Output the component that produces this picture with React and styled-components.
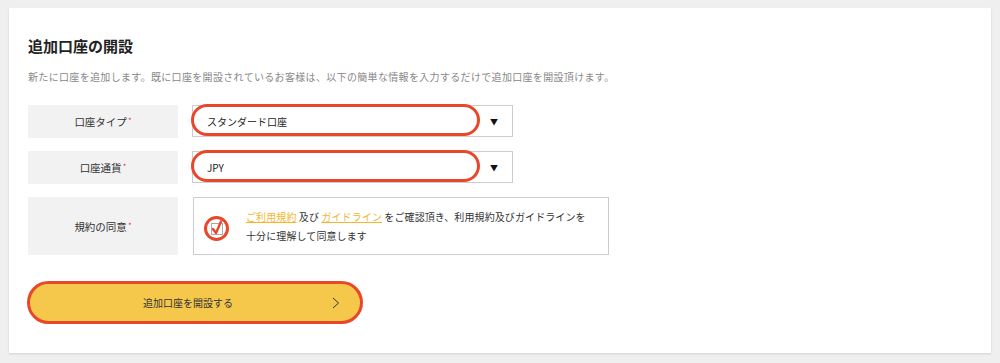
import React from 'react';
import styled, { createGlobalStyle } from 'styled-components';

const GlobalStyle = createGlobalStyle`
  body {
    margin: 0;
    background-color: #efefef;
    font-family: "Noto Sans CJK JP", "Noto Sans", sans-serif;
    color: #333;
  }
`;

const Page = styled.div`
  width: 1000px;
  height: 363px;
  padding: 8px 9px 10px;
  box-sizing: border-box;
`;

const Card = styled.div`
  height: 345px;
  padding: 28px 19px 0;
  box-sizing: border-box;
  background-color: #fff;
  box-shadow: 0 1px 2px rgba(0, 0, 0, 0.12);
  display: flex;
  flex-direction: column;
`;

const Title = styled.h2`
  margin: 0;
  font-size: 15px;
  line-height: 20px;
  font-weight: 700;
  color: #222;
`;

const Lead = styled.p`
  margin: 13px 0 0;
  font-size: 10px;
  line-height: 16px;
  letter-spacing: 0.33px;
  color: #888;
`;

const Form = styled.div`
  margin-top: 20px;
  display: flex;
  flex-direction: column;
  gap: 13px;
`;

const Row = styled.div`
  display: grid;
  grid-template-columns: 150px 1fr;
  column-gap: 14px;
  height: ${p => p.tall ? '58px' : '33px'};
`;

const Label = styled.div`
  display: flex;
  align-items: center;
  justify-content: center;
  background-color: #f2f2f2;
  font-size: 10.5px;
  color: #333;
`;

const Req = styled.sup`
  color: #e8344a;
  font-size: 8px;
  margin-left: 1px;
  position: relative;
  top: -1px;
`;

const Select = styled.div`
  position: relative;
  width: 321px;
  height: 32px;
  border: 1px solid #ccc;
  box-sizing: border-box;
  display: flex;
  align-items: center;
  justify-content: space-between;
  padding: 0 14px 0 14px;
  font-size: 10px;
  color: #222;
`;

const Arrow = styled.span`
  font-size: 8px;
  color: #111;
`;

const Mark = styled.span`
  position: absolute;
  left: -2px;
  top: -2px;
  width: 289px;
  height: 32px;
  border: 3px solid #e8472a;
  border-radius: 18px;
  box-sizing: border-box;
  pointer-events: none;
`;

const AgreeBox = styled.div`
  width: 416px;
  margin-left: 1px;
  border: 1px solid #ccc;
  box-sizing: border-box;
  display: flex;
  align-items: center;
  padding: 0 10px;
  gap: 17px;
`;

const CheckRing = styled.div`
  position: relative;
  width: 25px;
  height: 25px;
  border: 3px solid #e8472a;
  border-radius: 50%;
  box-sizing: border-box;
  flex-shrink: 0;
  margin-top: 5px;
  display: flex;
  align-items: center;
  justify-content: center;
`;

const CheckSquare = styled.div`
  width: 10px;
  height: 10px;
  border: 1px solid #aaa;
  background: #fff;
`;

const Tick = styled.svg`
  position: absolute;
  left: 4px;
  top: 1px;
`;

const AgreeText = styled.p`
  margin: 0;
  font-size: 10px;
  line-height: 19px;
  color: #333;
  letter-spacing: 0.1px;
`;

const Link = styled.a`
  color: #f2b62e;
  text-decoration: underline;
`;

const Submit = styled.button`
  margin: 26px 0 0 -1px;
  width: 336px;
  height: 43px;
  background-color: #f5c84c;
  border: 3px solid #e8472a;
  border-radius: 22px;
  box-sizing: border-box;
  display: flex;
  align-items: center;
  justify-content: center;
  position: relative;
  font-family: inherit;
  font-size: 10px;
  color: #333;
  padding: 0 14px 0 0;
`;

const Chevron = styled.svg`
  position: absolute;
  right: 20px;
  top: 50%;
  margin-top: -6px;
`;

export default function App() {
  return (
    <>
      <GlobalStyle />
      <Page>
        <Card>
          <Title>追加口座の開設</Title>
          <Lead>新たに口座を追加します。既に口座を開設されているお客様は、以下の簡単な情報を入力するだけで追加口座を開設頂けます。</Lead>
          <Form>
            <Row>
              <Label>口座タイプ<Req>*</Req></Label>
              <Select>
                <span>スタンダード口座</span>
                <Arrow>▼</Arrow>
                <Mark />
              </Select>
            </Row>
            <Row>
              <Label>口座通貨<Req>*</Req></Label>
              <Select>
                <span>JPY</span>
                <Arrow>▼</Arrow>
                <Mark />
              </Select>
            </Row>
            <Row tall>
              <Label>規約の同意<Req>*</Req></Label>
              <AgreeBox>
                <CheckRing>
                  <CheckSquare />
                  <Tick width="12" height="15" viewBox="0 0 12 15">
                    <path d="M2 9 L5 13 L10 1.5" fill="none" stroke="#e8472a" strokeWidth="2.4" strokeLinecap="round" strokeLinejoin="round" />
                  </Tick>
                </CheckRing>
                <AgreeText>
                  <Link>ご利用規約</Link> 及び <Link>ガイドライン</Link> をご確認頂き、利用規約及びガイドラインを<br />
                  十分に理解して同意します
                </AgreeText>
              </AgreeBox>
            </Row>
          </Form>
          <Submit>
            追加口座を開設する
            <Chevron width="8" height="12" viewBox="0 0 8 12">
              <path d="M1 1 L6.5 6 L1 11" fill="none" stroke="#333" strokeWidth="1" />
            </Chevron>
          </Submit>
        </Card>
      </Page>
    </>
  );
}
